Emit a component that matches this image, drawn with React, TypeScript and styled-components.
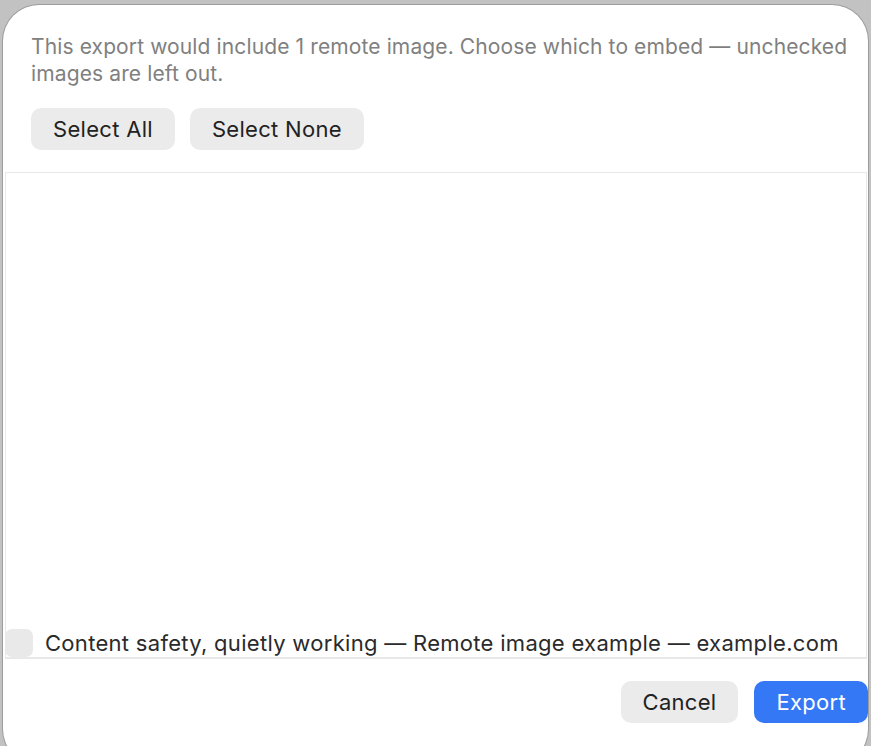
import React from "react";
import styled, { createGlobalStyle } from "styled-components";

const Global = createGlobalStyle`
  html, body {
    margin: 0;
    padding: 0;
    background: #c2c2c2;
    overflow: hidden;
    height: 100%;
  }
  body {
    font-family: Inter, "Noto Sans", "Liberation Sans", sans-serif;
  }
`;

const Backdrop = styled.div`
  width: 871px;
  height: 746px;
  padding: 5px 0 0 3px;
  box-sizing: border-box;
`;

const Dialog = styled.div`
  width: 865px;
  height: 760px;
  box-sizing: border-box;
  background: #ffffff;
  border-radius: 36px;
  box-shadow: 0 0 0 1px #9d9d9d;
  padding-top: 28px;
  display: flex;
  flex-direction: column;
  overflow: hidden;
`;

const Message = styled.p`
  margin: 0;
  padding: 0 10px 0 28px;
  font-size: 21px;
  line-height: 27px;
  letter-spacing: 0.12px;
  color: #808080;
`;

const ButtonRow = styled.div`
  display: flex;
  gap: 15px;
  padding: 0 28px;
  margin-top: 21px;
`;

const Button = styled.button<{ $primary?: boolean }>`
  height: 42px;
  padding: 0 22px;
  border: none;
  border-radius: 10px;
  font-family: inherit;
  font-size: 22px;
  letter-spacing: 0.3px;
  background: ${(p) => (p.$primary ? "#3478f6" : "#ebebeb")};
  color: ${(p) => (p.$primary ? "#ffffff" : "#222222")};
`;

const List = styled.div`
  margin: 22px 1px 0 2px;
  height: 487px;
  box-sizing: border-box;
  border: 1.5px solid #e8e8e8;
  border-bottom-width: 2px;
  display: flex;
  flex-direction: column;
  justify-content: flex-end;
`;

const Row = styled.label`
  display: flex;
  align-items: center;
  gap: 12px;
  height: 28px;
  margin-left: -1px;
`;

const Check = styled.span`
  width: 28px;
  height: 28px;
  border-radius: 7px;
  background: #e9e9e9;
  flex: none;
`;

const RowText = styled.span`
  font-size: 22px;
  letter-spacing: 0.3px;
  color: #2a2a2a;
  white-space: nowrap;
`;

const Footer = styled.div`
  display: flex;
  justify-content: flex-end;
  gap: 16px;
  margin-top: 22px;
  padding-right: 0;
`;

export default function App() {
  return (
    <Backdrop>
      <Global />
      <Dialog>
        <Message>
          This export would include 1 remote image. Choose which to embed — unchecked
          images are left out.
        </Message>
        <ButtonRow>
          <Button>Select All</Button>
          <Button>Select None</Button>
        </ButtonRow>
        <List>
          <Row>
            <Check />
            <RowText>Content safety, quietly working — Remote image example — example.com</RowText>
          </Row>
        </List>
        <Footer>
          <Button>Cancel</Button>
          <Button $primary>Export</Button>
        </Footer>
      </Dialog>
    </Backdrop>
  );
}
